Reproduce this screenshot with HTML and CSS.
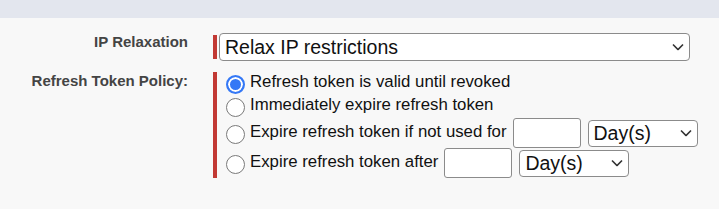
FILE: index.html
```html
<!DOCTYPE html>
<html lang="en">
<head>
    <meta charset="UTF-8">
    <meta name="viewport" content="width=device-width, initial-scale=1.0">
    <title>Session Policies</title>
    <link rel="stylesheet" href="styles.css">
</head>
<body>
    <div class="top-band"></div>

    <div class="policy-form">
        <div class="field-label">IP Relaxation</div>
        <div class="field-cell">
            <div class="required-block required-select">
                <span class="select-wrap select-wide">
                    <select class="picklist">
                        <option>Relax IP restrictions</option>
                    </select>
                    <svg class="chevron" width="12" height="7" viewBox="0 0 12 7"><path d="M1 1 L6 6 L11 1"/></svg>
                </span>
            </div>
        </div>

        <div class="field-label">Refresh Token Policy:</div>
        <div class="field-cell">
            <div class="required-block radio-group">
                <label class="radio-row row-short">
                    <input type="radio" name="refresh" class="radio" checked>
                    <span class="radio-text">Refresh token is valid until revoked</span>
                </label>
                <label class="radio-row row-short">
                    <input type="radio" name="refresh" class="radio">
                    <span class="radio-text">Immediately expire refresh token</span>
                </label>
                <label class="radio-row">
                    <input type="radio" name="refresh" class="radio">
                    <span class="radio-text">Expire refresh token if not used for</span>
                    <input type="text" class="num-input">
                    <span class="select-wrap select-unit">
                        <select class="picklist">
                            <option>Day(s)</option>
                        </select>
                        <svg class="chevron" width="12" height="7" viewBox="0 0 12 7"><path d="M1 1 L6 6 L11 1"/></svg>
                    </span>
                </label>
                <label class="radio-row">
                    <input type="radio" name="refresh" class="radio">
                    <span class="radio-text">Expire refresh token after</span>
                    <input type="text" class="num-input">
                    <span class="select-wrap select-unit">
                        <select class="picklist">
                            <option>Day(s)</option>
                        </select>
                        <svg class="chevron" width="12" height="7" viewBox="0 0 12 7"><path d="M1 1 L6 6 L11 1"/></svg>
                    </span>
                </label>
            </div>
        </div>
    </div>
</body>
</html>
```

FILE: styles.css
```css
body {
    margin: 0;
    background: #f8f8f8;
    font-family: "Liberation Sans", Arial, sans-serif;
    color: #111;
}

.top-band {
    height: 18px;
    background: #e3e6ee;
}

.policy-form {
    display: grid;
    grid-template-columns: 188px 1fr;
    column-gap: 25px;
    row-gap: 11px;
    padding-top: 15px;
}

.field-label {
    text-align: right;
    font-size: 15px;
    line-height: 18px;
    font-weight: bold;
    color: #444;
}

.required-block {
    display: flex;
    border-left: 4px solid #c23934;
    padding-left: 2px;
}

/* bar is a bit shorter than the select it marks */
.required-select {
    margin: 2px 0;
}

.select-wrap {
    position: relative;
    display: inline-block;
}

.select-wide {
    width: 471px;
    height: 28px;
    margin: -2px 0;
}

.picklist {
    appearance: none;
    -webkit-appearance: none;
    width: 100%;
    height: 100%;
    box-sizing: border-box;
    margin: 0;
    padding: 0 24px 0 5px;
    background: #fff;
    border: 1px solid #8b8b8b;
    border-radius: 4px;
    font-family: "Liberation Sans", Arial, sans-serif;
    font-size: 19.5px;
    color: #111;
}

/* arrow sits over the select */
.chevron {
    position: absolute;
    right: 6px;
    top: 50%;
    transform: translateY(-50%);
    pointer-events: none;
}

.chevron path {
    fill: none;
    stroke: #333;
    stroke-width: 1.6;
}

.radio-group {
    flex-direction: column;
    padding-left: 9px;
}

.radio-row {
    display: flex;
    align-items: center;
    height: 30px;
}

.row-short {
    height: 23px;
}

.radio {
    appearance: none;
    -webkit-appearance: none;
    flex: none;
    width: 19px;
    height: 19px;
    box-sizing: border-box;
    margin: 2px 5px 0 0;
    border: 1px solid #7a7a7a;
    border-radius: 50%;
    background: #fff;
}

.radio:checked {
    border: 2px solid #3478f6;
    background: #3478f6;
    box-shadow: inset 0 0 0 2px #fff;
}

.radio-text {
    font-size: 16.8px;
    line-height: 20px;
    padding-bottom: 3px;
    white-space: nowrap;
}

.num-input {
    flex: none;
    width: 68px;
    height: 30px;
    box-sizing: border-box;
    margin: 0 7px 0 6px;
    background: #fff;
    border: 1px solid #8b8b8b;
    border-radius: 3px;
}

.select-unit {
    flex: none;
    width: 110px;
    height: 27px;
}
```
